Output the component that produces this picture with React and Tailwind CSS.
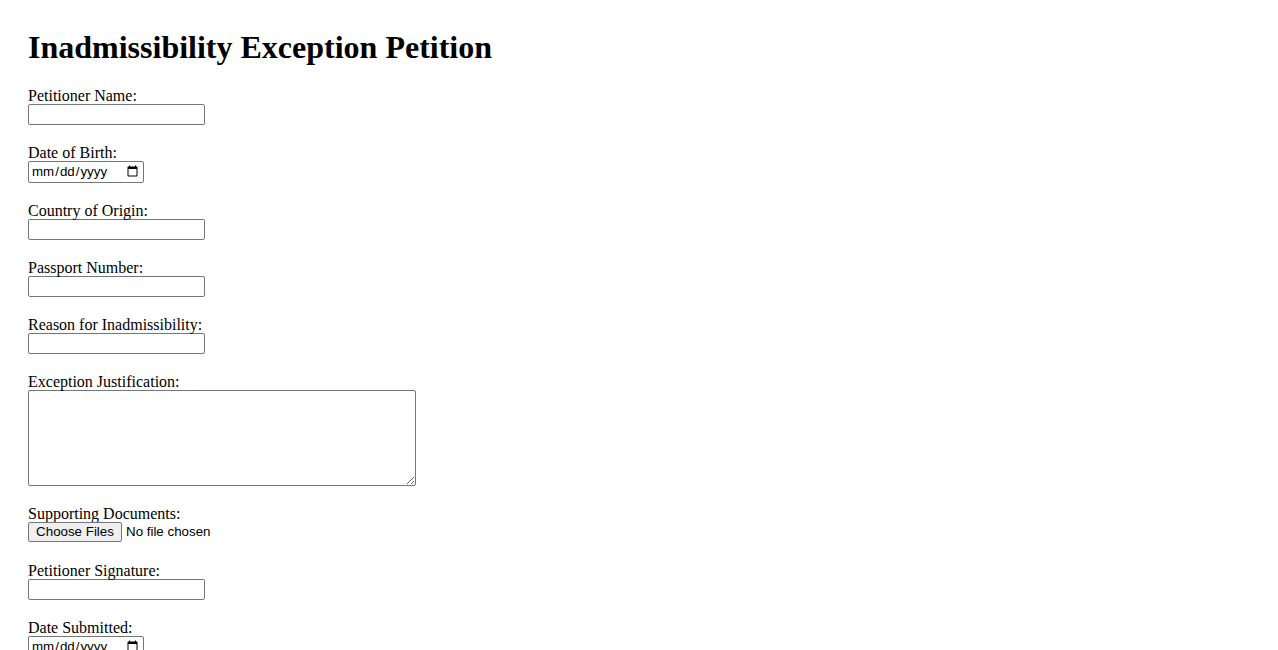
import React from "react";

const serif = "font-['Liberation_Serif','Times_New_Roman',serif]";
const textInput =
  "block w-[177px] h-[21px] -mt-px border border-[#767676] rounded-[2px] bg-white px-[2px] text-[13.333px] font-['Liberation_Sans',Arial,sans-serif] text-black";
const dateInput =
  "block w-[116px] h-[22px] -mt-px border border-[#767676] rounded-[2px] bg-white pl-[2px] pr-[2px] text-[13.333px] font-['Liberation_Sans',Arial,sans-serif] text-black";

function Field({ label, children, mb = "mb-[17px]" }) {
  return (
    <div className={mb}>
      <label className="block pt-[2px] leading-[18px] text-[16px]">{label}</label>
      {children}
    </div>
  );
}

export default function App() {
  return (
    <div className={`${serif} text-black bg-white min-h-[650px] px-[28px] pt-[29px]`}>
      <h1 className="text-[32px] font-bold leading-[37px] mb-[19px]">
        Inadmissibility Exception Petition
      </h1>
      <form>
        <Field label="Petitioner Name:">
          <input type="text" className={textInput} />
        </Field>
        <Field label="Date of Birth:">
          <input type="date" className={dateInput} />
        </Field>
        <Field label="Country of Origin:">
          <input type="text" className={textInput} />
        </Field>
        <Field label="Passport Number:">
          <input type="text" className={textInput} />
        </Field>
        <Field label="Reason for Inadmissibility:">
          <input type="text" className={textInput} />
        </Field>
        <Field label="Exception Justification:" mb="mb-[17px]">
          <textarea className="block w-[388px] h-[96px] -mt-px border border-[#767676] rounded-[2px] bg-white p-[2px] text-[13.333px] font-['Liberation_Mono',monospace] resize-y" />
        </Field>
        <Field label="Supporting Documents:">
          <div className="flex items-start gap-[4px] -mt-[1px] h-[21px] font-['Liberation_Sans',Arial,sans-serif] text-[13.333px]">
            <button
              type="button"
              className="h-[20px] w-[94px] border border-[#767676] rounded-[2px] bg-[#efefef] text-black text-[13.333px] leading-[18px]"
            >
              Choose Files
            </button>
            <span className="leading-[20px]">No file chosen</span>
          </div>
        </Field>
        <Field label="Petitioner Signature:">
          <input type="text" className={textInput} />
        </Field>
        <Field label="Date Submitted:">
          <input type="date" className={dateInput} />
        </Field>
      </form>
    </div>
  );
}
